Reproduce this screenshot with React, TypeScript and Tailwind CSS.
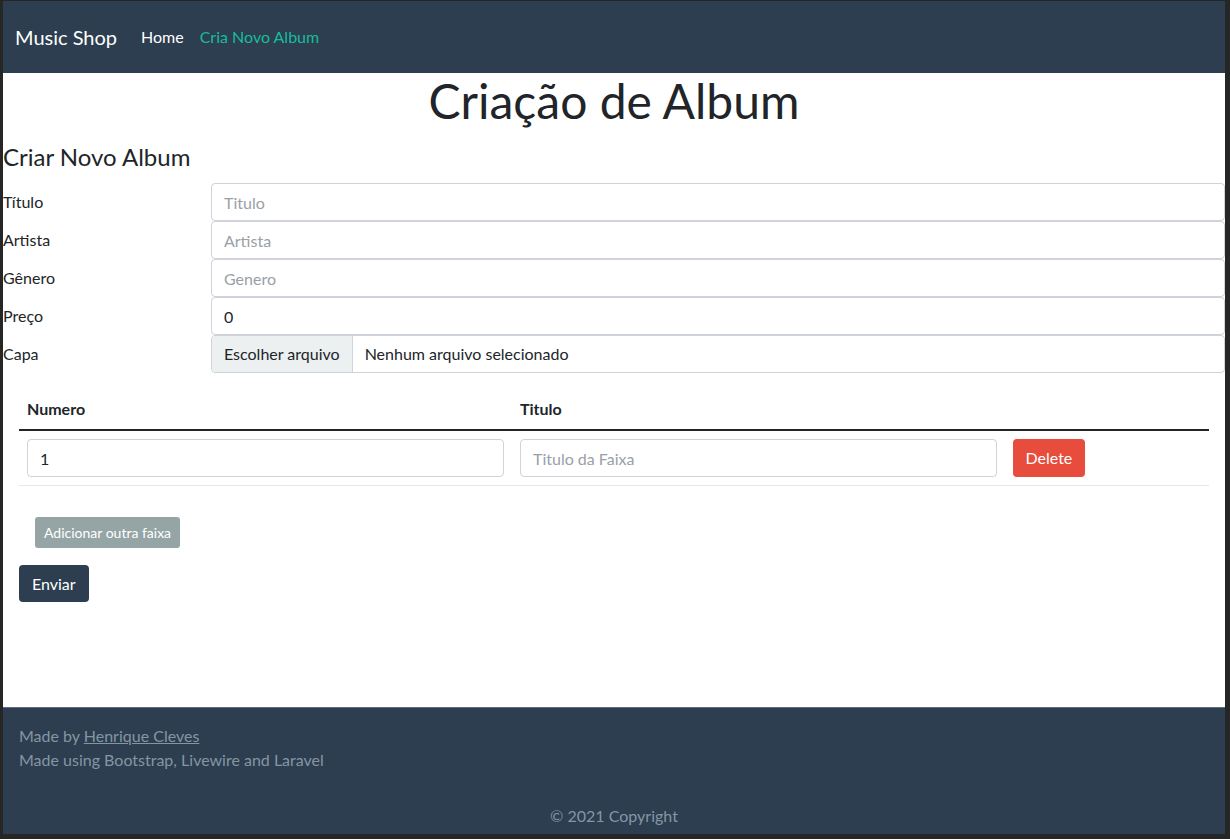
export default function App() {
  const fields = [
    { label: 'Título', placeholder: 'Titulo' },
    { label: 'Artista', placeholder: 'Artista' },
    { label: 'Gênero', placeholder: 'Genero' },
  ];

  return (
    <div className="h-[839px] bg-[#262626] pt-px pl-[3px] pr-[5px] pb-[5px] font-['Lato',sans-serif] text-[16px] text-[#212529]">
      <div className="flex h-full flex-col bg-white">
        <nav className="flex h-[72px] shrink-0 items-center bg-[#2c3e50] px-3">
          <span className="mr-4 text-[20px] text-white">Music Shop</span>
          <div className="flex items-center">
            <a className="px-2 text-white">Home</a>
            <a className="px-2 text-[#18bc9c]">Cria Novo Album</a>
          </div>
        </nav>

        <main className="flex-1">
          <h1 className="-mt-[1px] text-center text-[48px] leading-[1.2]">Criação de Album</h1>
          <h3 className="mt-[13px] text-[24px] leading-[1.2]">Criar Novo Album</h3>

          <div className="mt-[12px] flex flex-col">
            {fields.map((f) => (
              <div key={f.label} className="flex items-center">
                <label className="w-[208px]">{f.label}</label>
                <input
                  placeholder={f.placeholder}
                  className="h-[38px] flex-1 rounded-[4px] border border-[#ced4da] px-3 placeholder:text-[#9aa0a6]"
                />
              </div>
            ))}
            <div className="flex items-center">
              <label className="w-[208px]">Preço</label>
              <input
                defaultValue="0"
                className="h-[38px] flex-1 rounded-[4px] border border-[#ced4da] px-3"
              />
            </div>
            <div className="flex items-center">
              <label className="w-[208px]">Capa</label>
              <div className="flex h-[38px] flex-1 items-center overflow-hidden rounded-[4px] border border-[#ced4da]">
                <span className="flex h-full items-center border-r border-[#ced4da] bg-[#ecf0f1] px-3">
                  Escolher arquivo
                </span>
                <span className="px-3">Nenhum arquivo selecionado</span>
              </div>
            </div>
          </div>

          <div className="px-4 pt-[16px]">
            <table className="w-full border-collapse">
              <thead>
                <tr className="border-b-2 border-[#212529]">
                  <th className="w-[493px] px-2 py-2 text-left font-bold">Numero</th>
                  <th className="w-[493px] px-2 py-2 text-left font-bold">Titulo</th>
                  <th className="px-2 py-2"></th>
                </tr>
              </thead>
              <tbody>
                <tr className="border-b border-[#e5e7eb]">
                  <td className="px-2 py-2">
                    <input
                      defaultValue="1"
                      className="h-[38px] w-full rounded-[4px] border border-[#ced4da] px-3"
                    />
                  </td>
                  <td className="px-2 py-2">
                    <input
                      placeholder="Titulo da Faixa"
                      className="h-[38px] w-full rounded-[4px] border border-[#ced4da] px-3 placeholder:text-[#9aa0a6]"
                    />
                  </td>
                  <td className="px-2 py-2">
                    <button className="h-[38px] rounded-[4px] bg-[#e74c3c] px-[12.5px] text-white">Delete</button>
                  </td>
                </tr>
              </tbody>
            </table>

            <div className="px-4 pt-[31px]">
              <button className="h-[31px] rounded-[3px] bg-[#95a5a6] px-[9px] text-[14px] text-white">
                Adicionar outra faixa
              </button>
            </div>
            <button className="mt-[17px] h-[37px] rounded-[4px] bg-[#2c3e50] px-[13px] text-white">
              Enviar
            </button>
          </div>
        </main>

        <footer className="h-[127px] shrink-0 border-t border-[#5d6d7e] bg-[#2c3e50] text-[#8496a3]">
          <div className="px-4 pt-[16px] leading-[24px]">
            <p>
              Made by <a className="underline">Henrique Cleves</a>
            </p>
            <p>Made using Bootstrap, Livewire and Laravel</p>
          </div>
          <p className="mt-[32px] text-center">© 2021 Copyright</p>
        </footer>
      </div>
    </div>
  );
}
